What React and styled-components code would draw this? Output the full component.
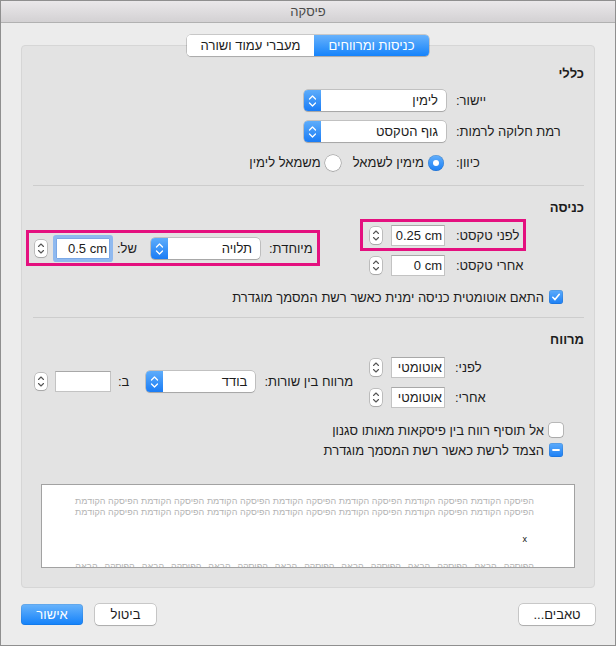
import React from 'react';
import styled, { createGlobalStyle } from 'styled-components';

const FONT = `"Liberation Sans", "DejaVu Sans", Arial, sans-serif`;

const GlobalStyle = createGlobalStyle`
  html, body {
    margin: 0;
    padding: 0;
    background: #ececec;
  }
  * {
    box-sizing: border-box;
  }
`;

const Window = styled.div`
    direction: rtl;
    width: 616px;
    height: 646px;
    border: 1px solid #8f8f8f;
    background: #ececec;
    display: flex;
    flex-direction: column;
    font-family: ${FONT};
    font-size: 13px;
    color: #1c1c1c;
`;
const TitleBar = styled.div`
    height: 22px;
    flex-shrink: 0;
    border-bottom: 1px solid #b1b1b1;
    background: linear-gradient(#eae8ea, #d3d1d3);
    display: flex;
    align-items: center;
    justify-content: center;
    color: #4a4a4a;
`;
const Body = styled.div`
    flex: 1;
    display: flex;
    flex-direction: column;
    padding: 0 20px;
`;
const Tabs = styled.div`
    align-self: center;
    display: flex;
    margin-top: 12px;
    height: 21px;
    position: relative;
    z-index: 1;
    border-radius: 4px;
    overflow: hidden;
    background: #fff;
    box-shadow: 0 0 0 0.5px rgba(0, 0, 0, 0.3), 0 1px 1px rgba(0, 0, 0, 0.12);
`;
const Tab = styled.div`
    width: ${p => p.$w}px;
    display: flex;
    align-items: center;
    justify-content: center;
    background: ${p => (p.$active ? 'linear-gradient(#68b2fb, #1583fb)' : '#fff')};
    color: ${p => (p.$active ? '#fff' : '#1c1c1c')};
`;
const Panel = styled.div`
    margin-top: -11px;
    height: 543px;
    border: 1px solid #d6d6d6;
    border-radius: 4px;
    background: #e3e3e3;
    padding: 20px 10px 0 11px;
    display: flex;
    flex-direction: column;
`;
const SectionTitle = styled.div`
    font-weight: bold;
    line-height: 16px;
    margin-top: ${p => p.$mt || 0}px;
`;
const Separator = styled.div`
    height: 1px;
    background: #cdcdcd;
    margin-top: 12px;
`;
const FormRows = styled.div`
    display: flex;
    flex-direction: column;
    gap: ${p => p.$gap}px;
    margin-top: ${p => p.$mt || 0}px;
    padding-right: ${p => p.$pr || 0}px;
`;
const Row = styled.div`
    display: flex;
    align-items: center;
    height: 21px;
`;
const HighlightRow = styled(Row)`
    position: relative;
    &::after {
        content: '';
        position: absolute;
        top: ${p => p.$t}px;
        bottom: ${p => p.$b}px;
        left: ${p => p.$l}px;
        right: ${p => p.$r}px;
        border: 3px solid #e4107f;
        pointer-events: none;
    }
`;
const LabelCell = styled.div`
    width: ${p => p.$w}px;
    margin-left: ${p => p.$gap}px;
    display: flex;
    justify-content: flex-end;
    white-space: nowrap;
`;
const InlineLabel = styled.span`
    white-space: nowrap;
    margin-right: ${p => p.$mr || 0}px;
    margin-left: ${p => p.$ml || 0}px;
`;
const Popup = styled.div`
    width: ${p => p.$w}px;
    height: 21px;
    display: flex;
    align-items: center;
    background: #fff;
    border-radius: 4px;
    overflow: hidden;
    box-shadow: 0 0 0 0.5px rgba(0, 0, 0, 0.3), 0 1px 1px rgba(0, 0, 0, 0.14);
`;
const PopupText = styled.span`
    flex: 1;
    padding-right: 8px;
    white-space: nowrap;
`;
const PopupArrow = styled.span`
    width: 17px;
    height: 100%;
    display: flex;
    align-items: center;
    justify-content: center;
    background: linear-gradient(#5eadfb, #1a7cf5);
`;
const Field = styled.div`
    width: ${p => p.$w}px;
    height: 21px;
    background: #fff;
    border: 1px solid #c3c3c3;
    border-top-color: #a8a8a8;
    padding: 0 2px;
    line-height: 19px;
    text-align: right;
    white-space: nowrap;
    direction: ${p => (p.$ltr ? 'ltr' : 'rtl')};
    ${p => p.$focus && `
        border-color: #7ba8e6;
        box-shadow: 0 0 0 3px #8fb9ef;
        border-radius: 1px;
    `}
`;
const StepperBox = styled.div`
    width: 12px;
    height: 17px;
    margin-right: ${p => p.$mr || 9}px;
    border-radius: 4px;
    background: #fff;
    box-shadow: 0 0 0 0.5px rgba(0, 0, 0, 0.32), 0 1px 1px rgba(0, 0, 0, 0.12);
    display: flex;
    align-items: center;
    justify-content: center;
`;
const RadioGroup = styled.div`
    display: flex;
    align-items: center;
`;
const RadioOption = styled.label`
    display: flex;
    align-items: center;
    gap: 4px;
    white-space: nowrap;
    & + & {
        margin-right: 12px;
    }
`;
const Radio = styled.span`
    width: 16px;
    height: 16px;
    border-radius: 50%;
    display: flex;
    align-items: center;
    justify-content: center;
    background: ${p => (p.$on ? 'linear-gradient(#63affb, #1a7ff5)' : '#fff')};
    box-shadow: ${p => (p.$on
        ? 'inset 0 0 0 0.5px rgba(0, 0, 0, 0.18)'
        : '0 0 0 0.5px rgba(0, 0, 0, 0.38), 0 1px 1px rgba(0, 0, 0, 0.1)')};
    &::after {
        content: '';
        display: ${p => (p.$on ? 'block' : 'none')};
        width: 6px;
        height: 6px;
        border-radius: 50%;
        background: #fff;
    }
`;
const IndentArea = styled.div`
    display: flex;
    justify-content: space-between;
    align-items: flex-start;
    margin-top: 9px;
    padding-right: ${p => p.$pr}px;
    padding-left: 2px;
`;
const SideGroup = styled.div`
    margin-top: ${p => p.$mt}px;
`;
const CheckRow = styled.div`
    display: flex;
    align-items: center;
    gap: 5px;
    height: 16px;
    padding-right: 21px;
    white-space: nowrap;
`;
const CheckBox = styled.span`
    width: 14px;
    height: 14px;
    border-radius: 3px;
    flex-shrink: 0;
    display: flex;
    align-items: center;
    justify-content: center;
    background: ${p => (p.$state ? 'linear-gradient(#5eacfb, #1b7ff5)' : '#fff')};
    box-shadow: ${p => (p.$state
        ? 'inset 0 0 0 0.5px rgba(0, 0, 0, 0.15)'
        : '0 0 0 0.5px rgba(0, 0, 0, 0.38), 0 1px 1px rgba(0, 0, 0, 0.08)')};
`;
const Preview = styled.div`
    margin: 26px 9px 0 8px;
    height: 84px;
    background: #fff;
    border: 1px solid #a2a2a2;
    overflow: hidden;
    padding: 11px 40px 0 33px;
    font-size: 9px;
    line-height: 11px;
    color: #b3b3b3;
`;
const PreviewLine = styled.div`
    white-space: nowrap;
    display: flex;
    justify-content: space-between;
`;
const PreviewCurrent = styled.div`
    margin: 16px 7px 16px 0;
    color: #111;
    line-height: 11px;
`;
const Footer = styled.div`
    display: flex;
    align-items: center;
    margin-top: 16px;
`;
const Spacer = styled.div`
    flex: 1;
`;
const Button = styled.div`
    width: ${p => p.$w}px;
    height: 21px;
    border-radius: 4px;
    display: flex;
    align-items: center;
    justify-content: center;
    margin-left: ${p => p.$ml || 0}px;
    background: ${p => (p.$primary ? 'linear-gradient(#6ab4fb, #1281fa)' : '#fff')};
    color: ${p => (p.$primary ? '#fff' : '#1c1c1c')};
    box-shadow: ${p => (p.$primary
        ? 'inset 0 0 0 0.5px rgba(0, 0, 0, 0.12)'
        : '0 0 0 0.5px rgba(0, 0, 0, 0.3), 0 1px 1px rgba(0, 0, 0, 0.14)')};
`;

const UpDown = () => (
    <svg width="9" height="14" viewBox="0 0 9 14">
        <path d="M1.5 5 L4.5 2 L7.5 5 M1.5 9 L4.5 12 L7.5 9" fill="none" stroke="#fff" strokeWidth="1.3" strokeLinecap="round" strokeLinejoin="round" />
    </svg>
);

const Stepper = ({ mr }) => (
    <StepperBox $mr={mr}>
        <svg width="8" height="13" viewBox="0 0 8 13">
            <path d="M1.5 4.5 L4 2 L6.5 4.5 M1.5 8.5 L4 11 L6.5 8.5" fill="none" stroke="#555" strokeWidth="1.1" strokeLinecap="round" strokeLinejoin="round" />
        </svg>
    </StepperBox>
);

const Select = ({ w, children }) => (
    <Popup $w={w}>
        <PopupText>{children}</PopupText>
        <PopupArrow><UpDown /></PopupArrow>
    </Popup>
);

const Check = ({ state, children }) => (
    <CheckRow>
        <CheckBox $state={state}>
            {state === 'checked' && (
                <svg width="10" height="10" viewBox="0 0 10 10">
                    <path d="M1.8 5.3 L4 7.6 L8.3 2.3" fill="none" stroke="#fff" strokeWidth="1.6" strokeLinecap="round" strokeLinejoin="round" />
                </svg>
            )}
            {state === 'mixed' && (
                <svg width="10" height="10" viewBox="0 0 10 10">
                    <path d="M2 5 H8" stroke="#fff" strokeWidth="1.8" strokeLinecap="round" />
                </svg>
            )}
        </CheckBox>
        <span>{children}</span>
    </CheckRow>
);

const beforeWords = Array(7).fill(['הפיסקה', 'הקודמת']).flat();
const afterWords = Array(7).fill(['הפיסקה', 'הבאה']).flat();

const PreviewWords = ({ words }) => (
    <PreviewLine>
        {words.map((w, i) => <span key={i}>{w}</span>)}
    </PreviewLine>
);

const App = () => {
    return (
        <>
            <GlobalStyle />
            <Window>
                <TitleBar>פיסקה</TitleBar>
                <Body>
                    <Tabs>
                        <Tab $w={115} $active>כניסות ומרווחים</Tab>
                        <Tab $w={127}>מעברי עמוד ושורה</Tab>
                    </Tabs>
                    <Panel>
                        <SectionTitle>כללי</SectionTitle>
                        <FormRows $gap={10} $mt={8} $pr={22}>
                            <Row>
                                <LabelCell $w={106} $gap={10}>יישור:</LabelCell>
                                <Select w={142}>לימין</Select>
                            </Row>
                            <Row>
                                <LabelCell $w={106} $gap={10}>רמת חלוקה לרמות:</LabelCell>
                                <Select w={142}>גוף הטקסט</Select>
                            </Row>
                            <Row>
                                <LabelCell $w={106} $gap={12}>כיוון:</LabelCell>
                                <RadioGroup>
                                    <RadioOption><Radio $on />מימין לשמאל</RadioOption>
                                    <RadioOption><Radio />משמאל לימין</RadioOption>
                                </RadioGroup>
                            </Row>
                        </FormRows>
                        <Separator />

                        <SectionTitle $mt={14}>כניסה</SectionTitle>
                        <IndentArea $pr={61}>
                            <FormRows $gap={9}>
                                <HighlightRow $t={-6} $b={-5} $l={-10} $r={-3}>
                                    <LabelCell $w={67} $gap={11}>לפני טקסט:</LabelCell>
                                    <Field $w={54} $ltr>0.25 cm</Field>
                                    <Stepper />
                                </HighlightRow>
                                <Row>
                                    <LabelCell $w={67} $gap={11}>אחרי טקסט:</LabelCell>
                                    <Field $w={54} $ltr>0 cm</Field>
                                    <Stepper />
                                </Row>
                            </FormRows>
                            <SideGroup $mt={13}>
                                <HighlightRow $t={-8} $b={-7} $l={-9} $r={-7}>
                                    <InlineLabel $ml={9}>מיוחדת:</InlineLabel>
                                    <Select w={109}>תלויה</Select>
                                    <InlineLabel $mr={14} $ml={7}>של:</InlineLabel>
                                    <Field $w={54} $ltr $focus>0.5 cm</Field>
                                    <Stepper />
                                </HighlightRow>
                            </SideGroup>
                        </IndentArea>
                        <FormRows $gap={0} $mt={13}>
                            <Check state="checked">התאם אוטומטית כניסה ימנית כאשר רשת המסמך מוגדרת</Check>
                        </FormRows>
                        <Separator />

                        <SectionTitle $mt={14}>מרווח</SectionTitle>
                        <IndentArea $pr={99}>
                            <FormRows $gap={9}>
                                <Row>
                                    <LabelCell $w={30} $gap={10}>לפני:</LabelCell>
                                    <Field $w={54}>אוטומטי</Field>
                                    <Stepper />
                                </Row>
                                <Row>
                                    <LabelCell $w={30} $gap={10}>אחרי:</LabelCell>
                                    <Field $w={54}>אוטומטי</Field>
                                    <Stepper />
                                </Row>
                            </FormRows>
                            <SideGroup $mt={14}>
                                <Row>
                                    <InlineLabel $ml={9}>מרווח בין שורות:</InlineLabel>
                                    <Select w={109}>בודד</Select>
                                    <InlineLabel $mr={17} $ml={7}>ב:</InlineLabel>
                                    <Field $w={56} />
                                    <Stepper mr={8} />
                                </Row>
                            </SideGroup>
                        </IndentArea>
                        <FormRows $gap={4} $mt={14}>
                            <Check>אל תוסיף רווח בין פיסקאות מאותו סגנון</Check>
                            <Check state="mixed">הצמד לרשת כאשר רשת המסמך מוגדרת</Check>
                        </FormRows>

                        <Preview>
                            <PreviewWords words={beforeWords} />
                            <PreviewWords words={beforeWords} />
                            <PreviewCurrent>x</PreviewCurrent>
                            <PreviewWords words={afterWords} />
                        </Preview>
                    </Panel>
                    <Footer>
                        <Button $w={76}>טאבים...</Button>
                        <Spacer />
                        <Button $w={61} $ml={12}>ביטול</Button>
                        <Button $w={62} $primary>אישור</Button>
                    </Footer>
                </Body>
            </Window>
        </>
    );
};

export default App;
